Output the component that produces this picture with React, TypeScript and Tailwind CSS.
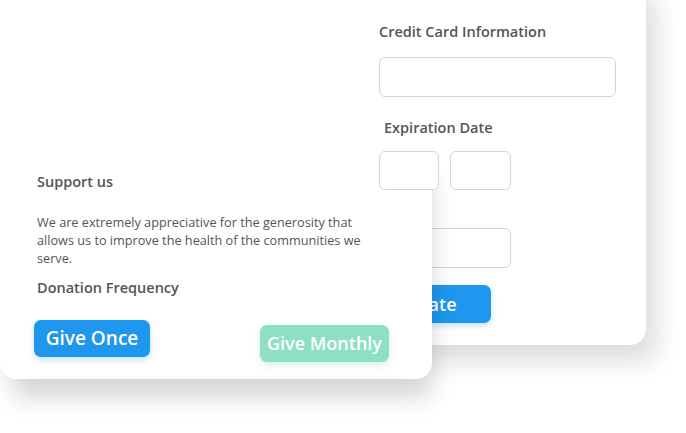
import React from "react";

const font = { fontFamily: '"Open Sans", "Liberation Sans", sans-serif' };

function Field({ className }: { className: string }) {
  return <div className={`border border-[#d4d4d4] rounded-[6px] bg-white ${className}`} />;
}

export default function App() {
  return (
    <div className="relative w-[686px] h-[433px] bg-white overflow-hidden" style={font}>
      {/* Payment card (back) */}
      <div className="absolute left-[-30px] top-[-30px] w-[676px] h-[375px] bg-white rounded-[16px] shadow-[14px_20px_26px_-4px_rgba(0,0,0,0.14)]">
        <div className="flex flex-col pl-[409px] pt-[52px]">
          <h3 className="text-[14.5px] font-semibold text-[#555] leading-[20px]">Credit Card Information</h3>
          <Field className="mt-[15px] w-[237px] h-[40px]" />
          <h3 className="mt-[21px] ml-[5px] text-[14.5px] font-semibold text-[#555] leading-[20px]">Expiration Date</h3>
          <div className="relative z-20 mt-[13px] flex gap-[11px]">
            <Field className="w-[60px] h-[39px]" />
            <Field className="w-[61px] h-[39px]" />
          </div>
          <Field className="mt-[38px] w-[132px] h-[40px]" />
          <button className="mt-[17px] w-[112px] h-[38px] rounded-[7px] bg-[#1f97ee] text-white text-[18px] font-semibold text-left pl-[14px] shadow-[0_3px_6px_rgba(30,150,240,0.25)]">
            Donate
          </button>
        </div>
      </div>

      {/* Support card (front) */}
      <div className="absolute z-10 left-0 top-[150px] w-[432px] h-[229px] bg-white rounded-[16px] shadow-[6px_24px_24px_-6px_rgba(0,0,0,0.17)]">
        <div className="flex flex-col pl-[37px] pt-[22px]">
          <h3 className="text-[14.5px] font-semibold text-[#555] leading-[20px]">Support us</h3>
          <p className="mt-[21px] w-[335px] text-[12.7px] text-[#555] leading-[18px]">
            We are extremely appreciative for the generosity that allows us to improve the health of the communities we serve.
          </p>
          <h3 className="mt-[11px] text-[14.5px] font-semibold text-[#555] leading-[20px]">Donation Frequency</h3>
          <div className="mt-[22px] flex items-start">
            <button className="-ml-[3px] w-[116px] h-[37px] rounded-[7px] bg-[#1f97ee] text-white text-[19px] font-semibold shadow-[0_3px_6px_rgba(30,150,240,0.25)]">
              Give Once
            </button>
            <button className="ml-[110px] mt-[5px] w-[129px] h-[37px] rounded-[7px] bg-[#8ee0c5] text-white text-[18px] font-semibold shadow-[0_3px_6px_rgba(100,200,170,0.25)]">
              Give Monthly
            </button>
          </div>
        </div>
      </div>
    </div>
  );
}
